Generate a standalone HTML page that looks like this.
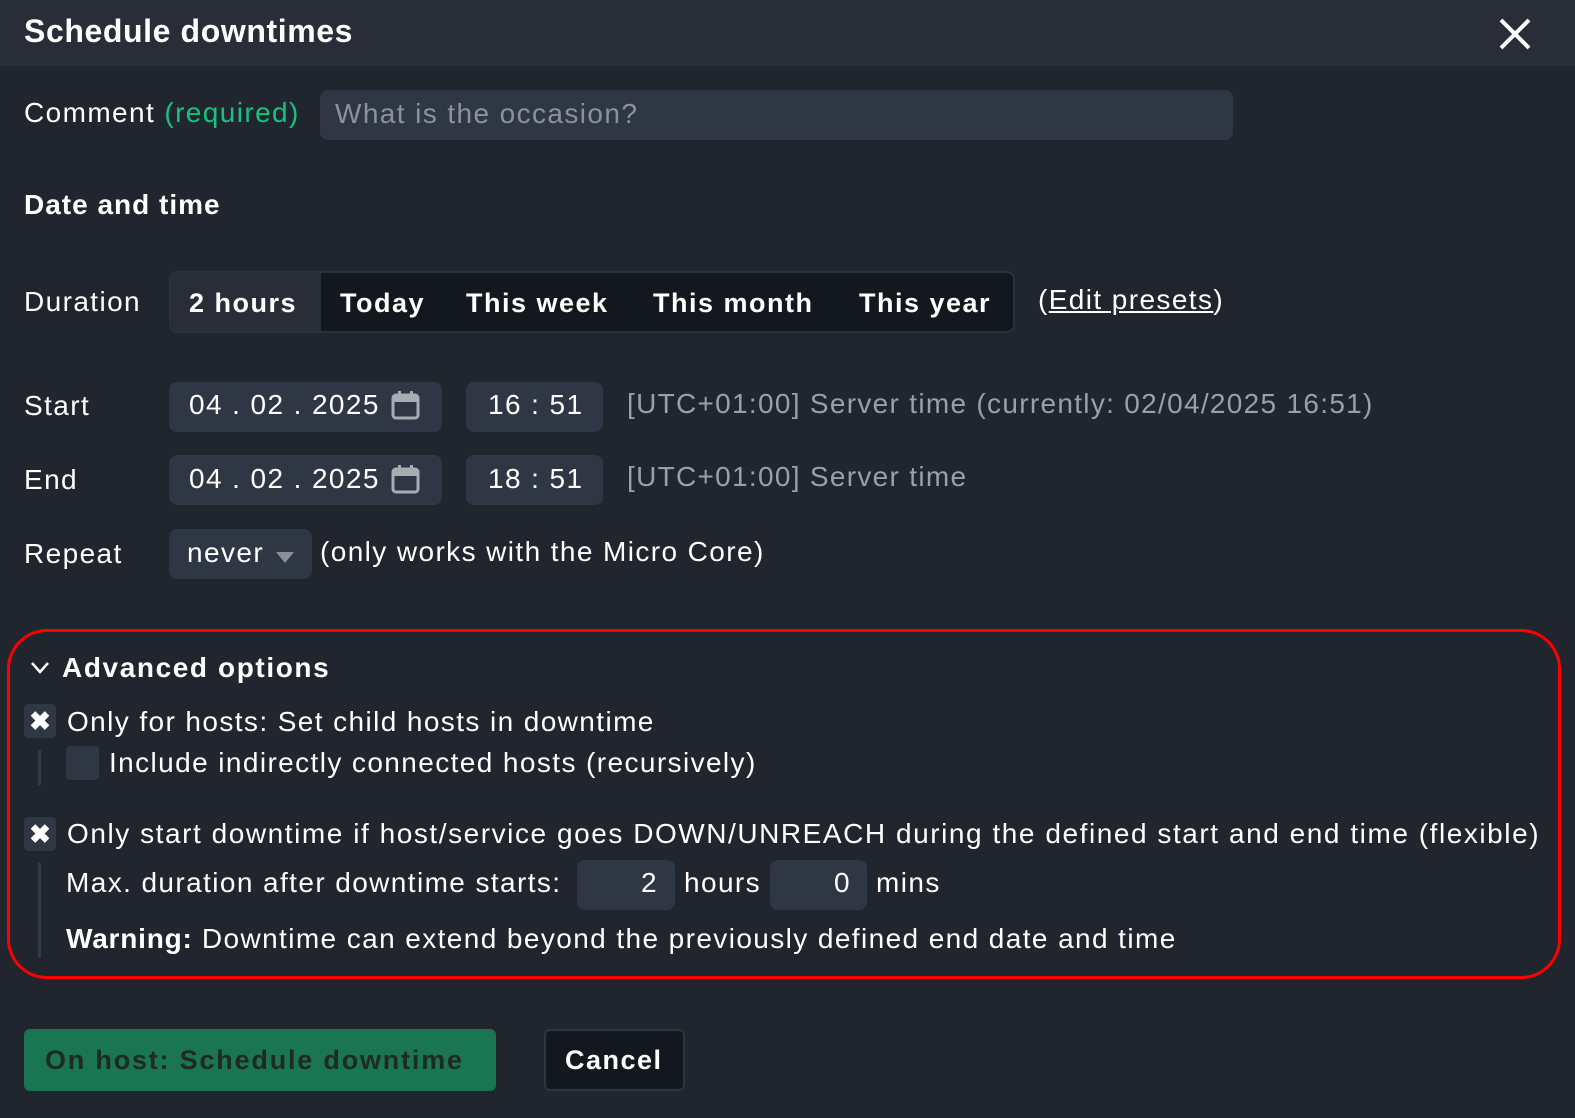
<!DOCTYPE html>
<html><head><meta charset="utf-8"><style>
*{margin:0;padding:0;box-sizing:border-box}
body{width:1575px;height:1118px;background:#21252e;color:#fff;font-family:"Liberation Sans",sans-serif;font-size:28px;letter-spacing:1.4px;position:relative;overflow:hidden}
.a{position:absolute;white-space:nowrap}
.hdr{position:absolute;left:0;top:0;width:1575px;height:66px;background:#282d37}
.inp{position:absolute;background:#2f3744;border-radius:8px}
.g{color:#9aa0a8}
.b{font-weight:bold;letter-spacing:1px}
.tab{font-weight:bold;letter-spacing:1.5px;font-size:27px}
.box{position:absolute;background:#2f3744;border-radius:4px;width:32px;height:34px;color:#fff;font-size:26px;text-align:center;line-height:34px;font-weight:bold;letter-spacing:0}
.vl{position:absolute;width:3px;background:#333a46}
</style></head><body>
<div class="hdr"></div>
<div class="a b" style="left:24px;top:13px;font-size:32px;letter-spacing:0.6px">Schedule downtimes</div>
<svg class="a" style="left:1498px;top:17px" width="34" height="34" viewBox="0 0 34 34"><path d="M3 3L31 31M31 3L3 31" stroke="#fff" stroke-width="4"/></svg>

<div class="a" style="left:24px;top:97px">Comment <span style="color:#15c281">(required)</span></div>
<div class="inp" style="left:320px;top:90px;width:913px;height:50px"></div>
<div class="a" style="left:335px;top:98px;color:#8c929a">What is the occasion?</div>

<div class="a b" style="left:24px;top:189px">Date and time</div>

<div class="a" style="left:24px;top:286px">Duration</div>
<div class="a" style="left:169px;top:271px;width:846px;height:62px;background:#13171e;border:2px solid #2b313b;border-radius:8px"></div>
<div class="a" style="left:171px;top:273px;width:150px;height:58px;background:#282d37;border-radius:6px 0 0 6px"></div>
<div class="a tab" style="left:189px;top:288px">2 hours</div>
<div class="a tab" style="left:340px;top:288px">Today</div>
<div class="a tab" style="left:466px;top:288px">This week</div>
<div class="a tab" style="left:653px;top:288px">This month</div>
<div class="a tab" style="left:859px;top:288px">This year</div>
<div class="a" style="left:1038px;top:284px">(<u>Edit presets</u>)</div>

<div class="a" style="left:24px;top:390px">Start</div>
<div class="inp" style="left:169px;top:382px;width:273px;height:50px"></div>
<div class="a" style="left:189px;top:389px">04 . 02 . 2025</div>
<svg class="a" style="left:391px;top:390px" width="30" height="30" viewBox="0 0 30 30"><rect x="2" y="5" width="25" height="23" rx="3" fill="none" stroke="#a8adb4" stroke-width="3"/><rect x="2" y="5" width="25" height="7" fill="#a8adb4"/><rect x="7" y="1" width="3" height="6" fill="#a8adb4"/><rect x="19" y="1" width="3" height="6" fill="#a8adb4"/></svg>
<div class="inp" style="left:466px;top:382px;width:137px;height:50px"></div>
<div class="a" style="left:488px;top:389px">16 : 51</div>
<div class="a g" style="left:627px;top:388px;letter-spacing:1.3px">[UTC+01:00] Server time (currently: 02/04/2025 16:51)</div>

<div class="a" style="left:24px;top:464px">End</div>
<div class="inp" style="left:169px;top:455px;width:273px;height:50px"></div>
<div class="a" style="left:189px;top:463px">04 . 02 . 2025</div>
<svg class="a" style="left:391px;top:464px" width="30" height="30" viewBox="0 0 30 30"><rect x="2" y="5" width="25" height="23" rx="3" fill="none" stroke="#a8adb4" stroke-width="3"/><rect x="2" y="5" width="25" height="7" fill="#a8adb4"/><rect x="7" y="1" width="3" height="6" fill="#a8adb4"/><rect x="19" y="1" width="3" height="6" fill="#a8adb4"/></svg>
<div class="inp" style="left:466px;top:455px;width:137px;height:50px"></div>
<div class="a" style="left:488px;top:463px">18 : 51</div>
<div class="a g" style="left:627px;top:461px;letter-spacing:1.3px">[UTC+01:00] Server time</div>

<div class="a" style="left:24px;top:538px">Repeat</div>
<div class="inp" style="left:169px;top:529px;width:143px;height:50px"></div>
<div class="a" style="left:187px;top:537px">never</div>
<svg class="a" style="left:276px;top:552px" width="18" height="11"><path d="M0 0H18L9 11Z" fill="#8c9096"/></svg>
<div class="a" style="left:320px;top:536px">(only works with the Micro Core)</div>

<div class="a" style="left:7px;top:629px;width:1554px;height:350px;border:3px solid #ff0000;border-radius:40px"></div>
<svg class="a" style="left:30px;top:661px" width="20" height="14"><path d="M2 2L10 11L18 2" stroke="#fff" stroke-width="2.5" fill="none"/></svg>
<div class="a b" style="left:62px;top:652px;letter-spacing:1.6px">Advanced options</div>

<div class="box" style="left:24px;top:704px">✖</div>
<div class="a" style="left:67px;top:706px">Only for hosts: Set child hosts in downtime</div>
<div class="vl" style="left:38px;top:750px;height:35px"></div>
<div class="inp" style="left:66px;top:746px;width:33px;height:34px;border-radius:4px"></div>
<div class="a" style="left:109px;top:747px">Include indirectly connected hosts (recursively)</div>

<div class="box" style="left:24px;top:817px">✖</div>
<div class="a" style="left:67px;top:818px;letter-spacing:1.55px">Only start downtime if host/service goes DOWN/UNREACH during the defined start and end time (flexible)</div>
<div class="vl" style="left:38px;top:863px;height:95px"></div>
<div class="a" style="left:66px;top:867px">Max. duration after downtime starts:</div>
<div class="inp" style="left:577px;top:860px;width:98px;height:50px"></div>
<div class="a" style="left:641px;top:867px">2</div>
<div class="a" style="left:684px;top:867px">hours</div>
<div class="inp" style="left:770px;top:860px;width:97px;height:50px"></div>
<div class="a" style="left:834px;top:867px">0</div>
<div class="a" style="left:876px;top:867px">mins</div>
<div class="a" style="left:66px;top:923px"><b style="letter-spacing:0.8px">Warning:</b> Downtime can extend beyond the previously defined end date and time</div>

<div class="a" style="left:24px;top:1029px;width:472px;height:62px;background:#1a7553;border-radius:6px"></div>
<div class="a tab" style="left:45px;top:1045px;color:#1f2a25;letter-spacing:1.8px">On host: Schedule downtime</div>
<div class="a" style="left:544px;top:1029px;width:141px;height:62px;background:#13171e;border:2px solid #2f3540;border-radius:6px"></div>
<div class="a tab" style="left:565px;top:1045px">Cancel</div>
</body></html>
